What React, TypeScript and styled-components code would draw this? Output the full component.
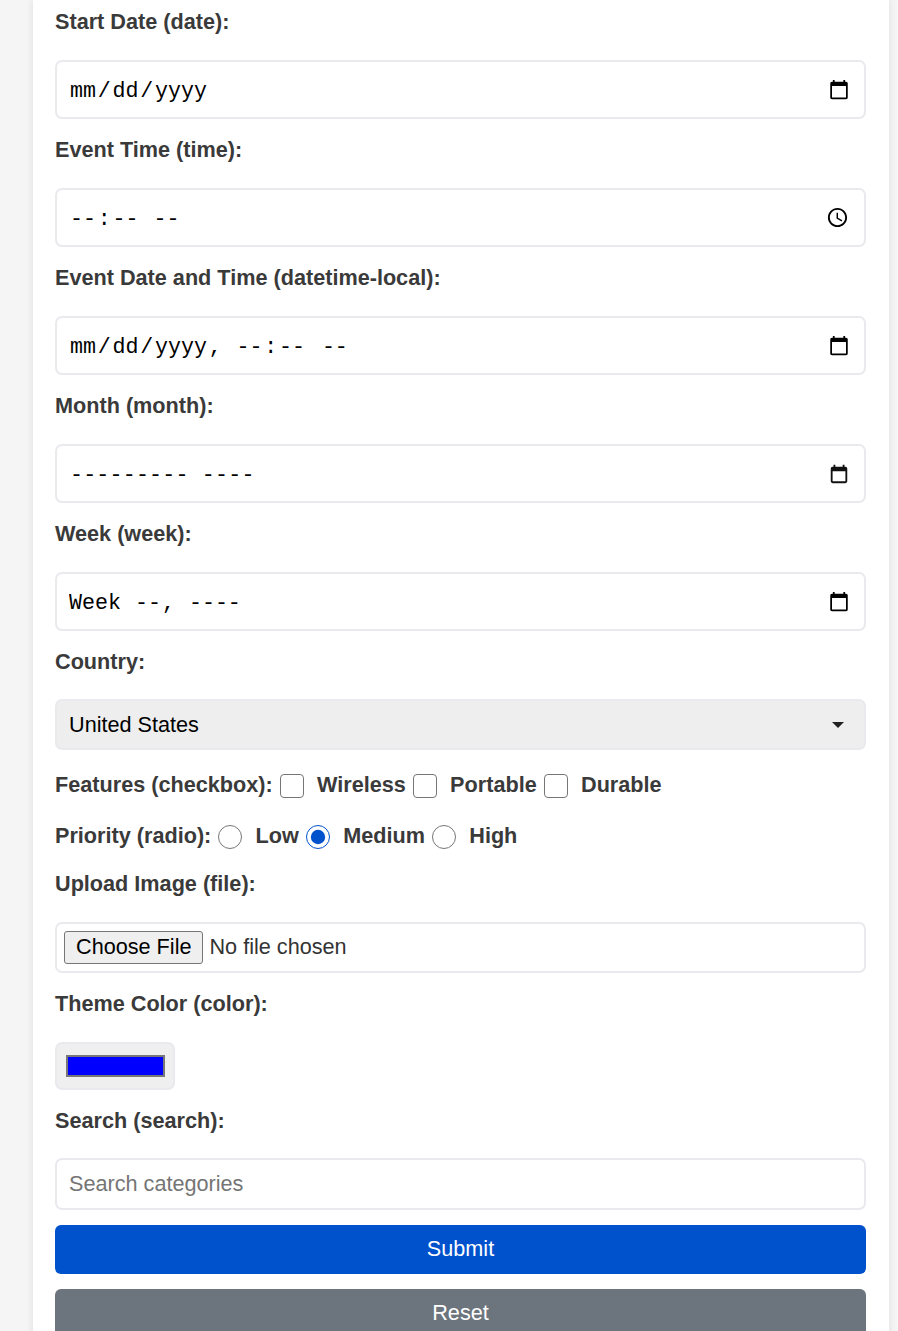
import React from "react";
import styled, { createGlobalStyle } from "styled-components";

const GlobalStyle = createGlobalStyle`
  html, body {
    margin: 0;
    height: 1331px;
    overflow: hidden;
    background: #f5f5f5;
    font-family: "Liberation Sans", Arial, sans-serif;
    font-size: 21.65px;
    color: #3a3a3a;
  }
`;

const Card = styled.form`
  box-sizing: border-box;
  width: 856px;
  margin-left: 33px;
  padding: 8px 23px 0 22px;
  background: #fff;
  box-shadow: 0 0 8px rgba(0, 0, 0, 0.1);
  display: flex;
  flex-direction: column;
`;

const Label = styled.label<{ $top?: number; $bottom?: number }>`
  display: block;
  height: 28px;
  line-height: 28px;
  font-weight: 700;
  margin-top: ${(p) => p.$top ?? 17}px;
  margin-bottom: ${(p) => p.$bottom ?? 24}px;
`;

const Field = styled.input<{ $height?: number }>`
  box-sizing: border-box;
  display: block;
  width: 100%;
  height: ${(p) => p.$height ?? 59}px;
  margin: 0;
  padding: 4px 12px 0;
  border: 2px solid #eaeaee;
  border-radius: 7px;
  background: #fff;
  font-size: 21.65px;
  font-family: "Liberation Mono", monospace;

  &::-webkit-calendar-picker-indicator {
    width: 22px;
    height: 22px;
    padding: 0;
    margin: 0 2px 4px 0;
  }

  &::-webkit-datetime-edit-text {
    padding: 0 0.75px;
  }

  &[type="week"]::-webkit-datetime-edit-text {
    padding: 0;
  }

  &[type="time"]::-webkit-datetime-edit-ampm-field {
    margin-left: 5px;
  }

  &[type="datetime-local"]::-webkit-datetime-edit-ampm-field {
    margin-left: 7px;
  }

  &[type="time"]::-webkit-calendar-picker-indicator {
    width: 23px;
    height: 23px;
    margin-right: 3px;
  }
`;

const MonthBox = styled.div`
  box-sizing: border-box;
  display: flex;
  align-items: center;
  height: 59px;
  padding: 4px 14px 0 13px;
  border: 2px solid #eaeaee;
  border-radius: 7px;
  background: #fff;
`;

const MonthValue = styled.input`
  flex: 1;
  min-width: 0;
  padding: 0;
  border: 0;
  outline: 0;
  color: #000;
  background: none;
  font: 21.65px "Liberation Mono", monospace;
  letter-spacing: 0.2px;
`;

const CalendarIcon = styled.svg`
  flex: none;
  width: 22px;
  height: 22px;
  margin-bottom: 4px;
`;

const TextField = styled(Field)`
  padding-top: 0;
  font-family: "Liberation Sans", Arial, sans-serif;
  color: #333;

  &::placeholder {
    color: #757575;
  }
`;

const FileField = styled(TextField)`
  padding: 7px 12px 0;

  &::file-selector-button {
    font: inherit;
    height: 33px;
    margin: 0 6px 0 -5px;
    padding: 0 11px 1px;
    color: #000;
    background: #efefef;
    border: 1.5px solid #767676;
    border-radius: 3px;
  }
`;

const CountrySelect = styled.select`
  box-sizing: border-box;
  display: block;
  width: 100%;
  height: 51px;
  padding: 0 12px;
  margin: 0;
  appearance: none;
  border: 2px solid #eaeaee;
  border-radius: 7px;
  background: #eee
    url("data:image/svg+xml,%3Csvg xmlns='http://www.w3.org/2000/svg' width='12' height='6'%3E%3Cpath d='M0 0h12l-6 6z' fill='%23222'/%3E%3C/svg%3E")
    no-repeat right 20px center;
  color: #000;
  font: 21.65px "Liberation Sans", Arial, sans-serif;
`;

const ChoiceRow = styled.div<{ $top: number }>`
  display: flex;
  align-items: center;
  height: 28px;
  margin-top: ${(p) => p.$top}px;
  font-weight: 700;
`;

const Choice = styled.input`
  flex: none;
  width: 24px;
  height: 24px;
  margin: 1px 13.3px 0 7px;
  accent-color: #0052cc;
`;

const CheckBox = styled(Choice)`
  appearance: none;
  box-sizing: border-box;
  border: 1.5px solid #767676;
  border-radius: 4px;
  background: #fff;
`;

const ColorField = styled.input`
  box-sizing: border-box;
  display: block;
  width: 120px;
  height: 48px;
  margin: 0;
  padding: 11px 8px 11px 9px;
  border: 2px solid #eaeaee;
  border-radius: 7px;
  background: #efefef;

  &::-webkit-color-swatch-wrapper {
    padding: 0;
  }

  &::-webkit-color-swatch {
    border: 2px solid #777;
    border-radius: 0;
  }
`;

const Action = styled.button<{ $bg: string }>`
  display: block;
  width: 100%;
  height: 49px;
  margin: 15px 0 0;
  padding: 0 0 2px;
  border: 0;
  border-radius: 6px;
  background: ${(p) => p.$bg};
  color: #fff;
  font: 21.65px "Liberation Sans", Arial, sans-serif;
`;

const Calendar = () => (
  <CalendarIcon viewBox="0 0 24 24">
    <path
      d="M19 4h-1V2h-2v2H8V2H6v2H5a2 2 0 0 0-2 2v14a2 2 0 0 0 2 2h14a2 2 0 0 0 2-2V6a2 2 0 0 0-2-2zm0 16H5V9h14v11z"
      fill="#111"
    />
  </CalendarIcon>
);

const dateFields = [
  { label: "Start Date (date):", type: "date" },
  { label: "Event Time (time):", type: "time" },
  { label: "Event Date and Time (datetime-local):", type: "datetime-local" },
];

export default function App() {
  return (
    <>
      <GlobalStyle />
      <Card onSubmit={(e) => e.preventDefault()}>
        {dateFields.map((f, i) => (
          <React.Fragment key={f.type}>
            <Label $top={i === 0 ? 0 : 17}>{f.label}</Label>
            <Field type={f.type} />
          </React.Fragment>
        ))}

        <Label>Month (month):</Label>
        <MonthBox>
          <MonthValue type="text" readOnly value="--------- ----" />
          <Calendar />
        </MonthBox>

        <Label>Week (week):</Label>
        <Field type="week" />

        <Label $bottom={23}>Country:</Label>
        <CountrySelect defaultValue="us">
          <option value="us">United States</option>
          <option value="ca">Canada</option>
        </CountrySelect>

        <ChoiceRow $top={21}>
          Features (checkbox):
          <CheckBox type="checkbox" />
          Wireless
          <CheckBox type="checkbox" />
          Portable
          <CheckBox type="checkbox" />
          Durable
        </ChoiceRow>

        <ChoiceRow $top={23}>
          Priority (radio):
          <Choice type="radio" name="priority" />
          Low
          <Choice type="radio" name="priority" defaultChecked />
          Medium
          <Choice type="radio" name="priority" />
          High
        </ChoiceRow>

        <Label $top={20}>Upload Image (file):</Label>
        <FileField type="file" $height={51} />

        <Label>Theme Color (color):</Label>
        <ColorField type="color" defaultValue="#0000ff" />

        <Label $bottom={23}>Search (search):</Label>
        <TextField type="search" placeholder="Search categories" $height={52} />

        <Action type="submit" $bg="#0052cc">Submit</Action>
        <Action type="reset" $bg="#6c757d">Reset</Action>
      </Card>
    </>
  );
}
